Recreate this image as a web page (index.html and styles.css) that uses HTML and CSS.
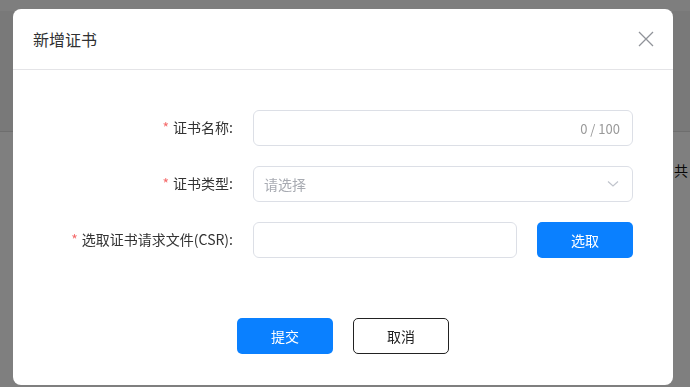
FILE: index.html
```html
<!DOCTYPE html>
<html lang="zh-CN">
<head>
    <meta charset="UTF-8">
    <title>新增证书</title>
    <link rel="stylesheet" href="styles.css">
</head>
<body>
<div class="page">
    <div class="page-top"></div>
    <div class="page-bar"></div>
    <div class="page-body">
        <span class="page-total">共</span>
    </div>
</div>
<div class="mask"></div>
<div class="dialog">
    <div class="dialog-head">
        <span class="dialog-title">新增证书</span>
        <a href="#" class="dialog-close">
            <svg width="16" height="16" viewBox="0 0 16 16"><path d="M1 1 L15 15 M15 1 L1 15" stroke="#909399" stroke-width="1.3" fill="none"/></svg>
        </a>
    </div>
    <div class="dialog-body">
        <div class="form-row">
            <label class="form-label"><i>*</i>证书名称:</label>
            <div class="form-field">
                <div class="input">
                    <span class="input-count">0 / 100</span>
                </div>
            </div>
        </div>
        <div class="form-row">
            <label class="form-label"><i>*</i>证书类型:</label>
            <div class="form-field">
                <div class="input select">
                    <span class="placeholder">请选择</span>
                    <svg width="12" height="8" viewBox="0 0 12 8"><path d="M1 1.5 L6 6 L11 1.5" stroke="#c0c4cc" stroke-width="1.2" fill="none"/></svg>
                </div>
            </div>
        </div>
        <div class="form-row">
            <label class="form-label"><i>*</i>选取证书请求文件(CSR):</label>
            <div class="form-field">
                <div class="input input-file"></div>
                <a href="#" class="btn btn-primary">选取</a>
            </div>
        </div>
    </div>
    <div class="dialog-foot">
        <a href="#" class="btn btn-primary">提交</a>
        <a href="#" class="btn btn-default">取消</a>
    </div>
</div>
</body>
</html>
```

FILE: styles.css
```css
html, body {
    margin: 0;
    padding: 0;
    height: 100%;
}
body {
    font-family: "Noto Sans CJK SC", "Noto Sans", sans-serif;
    font-size: 14px;
    color: #333;
    overflow: hidden;
}
a {
    text-decoration: none;
}
.page {
    height: 100%;
    background: #f4f4f4;
    display: flex;
    flex-direction: column;
}
.page .page-top {
    height: 11px;
    background: #fcfcfc;
}
.page .page-bar {
    height: 120px;
    background: #f2f2f2;
    border-bottom: 1px solid #dcdcdc;
}
.page .page-body {
    background: #fff;
    flex: 1;
    position: relative;
}
.page .page-total {
    position: absolute;
    left: 674px;
    top: 28px;
    font-size: 14px;
    color: #111;
}
.mask {
    position: fixed;
    left: 0;
    top: 0;
    right: 0;
    bottom: 0;
    background: rgba(0, 0, 0, .5);
}
.dialog {
    position: fixed;
    left: 13px;
    top: 9px;
    width: 660px;
    height: 376px;
    background: #fff;
    border-radius: 8px;
    display: flex;
    flex-direction: column;
}
.dialog .dialog-head {
    height: 60px;
    border-bottom: 1px solid #e4e4e7;
    display: flex;
    align-items: center;
    justify-content: space-between;
    padding: 0 19px 0 20px;
}
.dialog .dialog-title {
    font-size: 16px;
    color: #303133;
}
.dialog .dialog-close {
    display: block;
    width: 16px;
    height: 16px;
    line-height: 0;
}
.dialog .dialog-body {
    padding: 40px 40px 0 0;
    display: flex;
    flex-direction: column;
    gap: 20px;
}
.form-row {
    display: flex;
    align-items: center;
    height: 36px;
}
.form-row .form-label {
    width: 220px;
    padding-right: 20px;
    text-align: right;
    color: #333;
    font-size: 14px;
    margin-top: -2px;
}
.form-row .form-label i {
    font-style: normal;
    color: #f56c6c;
    margin-right: 4px;
}
.form-row .form-field {
    flex: 1;
    display: flex;
    gap: 20px;
}
.input {
    flex: 1;
    height: 36px;
    box-sizing: border-box;
    border: 1px solid #dcdfe6;
    border-radius: 6px;
    display: flex;
    align-items: center;
    padding: 0 12px 0 10px;
}
.input .input-count {
    margin-left: auto;
    font-size: 13px;
    color: #999;
}
.select {
    justify-content: space-between;
    padding-right: 13px;
}
.select .placeholder {
    color: #a8abb2;
    font-size: 14px;
}
.btn {
    display: flex;
    align-items: center;
    justify-content: center;
    width: 96px;
    height: 36px;
    box-sizing: border-box;
    border-radius: 5px;
    font-size: 14px;
}
.btn-primary {
    background: #0a80ff;
    color: #fff;
}
.btn-default {
    background: #fff;
    color: #222;
    border: 1px solid #222;
}
.dialog .dialog-foot {
    margin-top: 60px;
    display: flex;
    justify-content: center;
    gap: 20px;
}
```
